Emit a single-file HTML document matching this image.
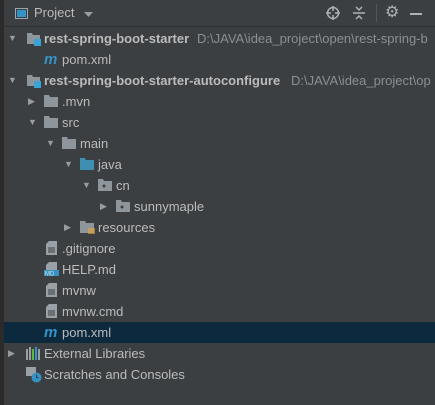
<!DOCTYPE html><html><head><style>
body{margin:0;width:435px;height:405px;background:#3c3f41;font-family:"Liberation Sans",sans-serif;font-size:13px;color:#bbbbbb;position:relative;overflow:hidden}
.strip{position:absolute;left:0;top:0;width:4px;height:405px;background:#2b2b2b}
.hdr{position:absolute;left:4px;top:0;right:0;height:26px;border-bottom:1px solid #2f3133}
.row{position:absolute;left:4px;right:0;height:21px;line-height:21px;white-space:nowrap}
.sel{background:#0d293e}
.a{position:absolute;top:0;font-size:9px;color:#9a9da0}
.i{position:absolute;top:4px}
.t{position:absolute;top:0}
.b{font-weight:bold}
.p{color:#8c8f92}
</style></head><body>
<div class="strip"></div>
<div class="hdr">
<svg style="position:absolute;left:11px;top:8px" width="13" height="11"><rect x="0.5" y="0.5" width="12" height="10" fill="none" stroke="#9aa7b0"/><rect x="2" y="2" width="9" height="7" fill="#3592c4"/></svg>
<span style="position:absolute;left:30px;top:5px">Project</span>
<svg style="position:absolute;left:80px;top:12px" width="9" height="5"><path d="M0 0h9L4.5 5z" fill="#9a9da0"/></svg>
<svg style="position:absolute;left:322px;top:6px" width="14" height="14"><circle cx="7" cy="7" r="5.5" fill="none" stroke="#aeb2b5" stroke-width="1.5"/><path d="M7 0v5M7 9v5M0 7h5M9 7h5" stroke="#aeb2b5" stroke-width="1.5"/></svg>
<svg style="position:absolute;left:349px;top:6px" width="12" height="14"><path d="M0 7h12" stroke="#aeb2b5" stroke-width="1.5"/><path d="M3 1l3 3 3-3M3 13l3-3 3 3" fill="none" stroke="#aeb2b5" stroke-width="1.5"/></svg>
<div style="position:absolute;left:372px;top:4px;width:1px;height:18px;background:#555"></div>
<span style="position:absolute;left:381px;top:2px;font-size:16px;color:#aeb2b5">⚙</span>
<div style="position:absolute;left:406px;top:13px;width:12px;height:2px;background:#aeb2b5"></div>
</div>

<div class="row" style="top:28px"><span class="a" style="left:4px">▼</span>
<svg class="i" style="left:23px" width="14" height="14"><path d="M0 1h5l1 2h7v9H0z" fill="#8e969c"/><rect x="7" y="7" width="7" height="7" fill="#3ba3d8"/></svg>
<span class="t b" style="left:40px">rest-spring-boot-starter</span><span class="t p" style="left:193px">D:\JAVA\idea_project\open\rest-spring-b</span></div>
<div class="row" style="top:49px"><span class="i" style="left:40px;top:0;color:#3592c4;font-style:italic;font-weight:bold;font-size:15px">m</span><span class="t" style="left:58px">pom.xml</span></div>
<div class="row" style="top:70px"><span class="a" style="left:4px">▼</span>
<svg class="i" style="left:23px" width="14" height="14"><path d="M0 1h5l1 2h7v9H0z" fill="#8e969c"/><rect x="7" y="7" width="7" height="7" fill="#3ba3d8"/></svg>
<span class="t b" style="left:40px">rest-spring-boot-starter-autoconfigure</span><span class="t p" style="left:287px">D:\JAVA\idea_project\op</span></div>

<div class="row" style="top:91px"><span class="a" style="left:24px">▶</span><svg class="i" style="left:40px" width="14" height="12"><path d="M0 0h5l1 2h8v10H0z" fill="#8e969c"/></svg><span class="t" style="left:58px">.mvn</span></div>
<div class="row" style="top:112px"><span class="a" style="left:24px">▼</span><svg class="i" style="left:40px" width="14" height="12"><path d="M0 0h5l1 2h8v10H0z" fill="#8e969c"/></svg><span class="t" style="left:58px">src</span></div>
<div class="row" style="top:133px"><span class="a" style="left:42px">▼</span><svg class="i" style="left:58px" width="14" height="12"><path d="M0 0h5l1 2h8v10H0z" fill="#8e969c"/></svg><span class="t" style="left:76px">main</span></div>
<div class="row" style="top:154px"><span class="a" style="left:60px">▼</span><svg class="i" style="left:76px" width="14" height="12"><path d="M0 0h5l1 2h8v10H0z" fill="#3e8fb0"/></svg><span class="t" style="left:94px">java</span></div>
<div class="row" style="top:175px"><span class="a" style="left:78px">▼</span><svg class="i" style="left:94px" width="14" height="12"><path d="M0 0h5l1 2h8v10H0z" fill="#8e969c"/><circle cx="6" cy="7" r="1.5" fill="#3c3f41"/></svg><span class="t" style="left:112px">cn</span></div>
<div class="row" style="top:196px"><span class="a" style="left:96px">▶</span><svg class="i" style="left:112px" width="14" height="12"><path d="M0 0h5l1 2h8v10H0z" fill="#8e969c"/><circle cx="6" cy="7" r="1.5" fill="#3c3f41"/></svg><span class="t" style="left:130px">sunnymaple</span></div>
<div class="row" style="top:217px"><span class="a" style="left:60px">▶</span><svg class="i" style="left:76px" width="16" height="14"><path d="M0 0h5l1 2h8v10H0z" fill="#8e969c"/><path d="M8 8h7M8 10h7M8 12h7" stroke="#e8a33a" stroke-width="1.2"/></svg><span class="t" style="left:94px">resources</span></div>
<div class="row" style="top:238px"><svg class="i" style="left:42px;top:3px" width="11" height="14"><path d="M3 0h8v14H0V3z" fill="#9aa1a6"/><path d="M2 7h7M2 9h7M2 11h7" stroke="#3c3f41"/></svg><span class="t" style="left:58px">.gitignore</span></div>
<div class="row" style="top:259px"><svg class="i" style="left:40px;top:3px" width="15" height="14"><path d="M5 0h8v9H2V3z" fill="#9aa1a6"/><rect x="0" y="8" width="15" height="6" fill="#3592c4"/><text x="1" y="13.5" font-size="6" fill="#ddd" font-family="Liberation Sans">MD</text></svg><span class="t" style="left:58px">HELP.md</span></div>
<div class="row" style="top:280px"><svg class="i" style="left:42px;top:3px" width="11" height="14"><path d="M3 0h8v14H0V3z" fill="#9aa1a6"/><path d="M2 7h7M2 9h7M2 11h7" stroke="#3c3f41"/></svg><span class="t" style="left:58px">mvnw</span></div>
<div class="row" style="top:301px"><svg class="i" style="left:42px;top:3px" width="11" height="14"><path d="M3 0h8v14H0V3z" fill="#9aa1a6"/><path d="M2 7h7M2 9h7M2 11h7" stroke="#3c3f41"/></svg><span class="t" style="left:58px">mvnw.cmd</span></div>
<div class="row sel" style="top:322px"><span class="i" style="left:40px;top:0;color:#3592c4;font-style:italic;font-weight:bold;font-size:15px">m</span><span class="t" style="left:58px">pom.xml</span></div>
<div class="row" style="top:343px"><span class="a" style="left:4px">▶</span><svg class="i" style="left:22px" width="14" height="13"><path d="M1 2v11M4 0v13M7 2v11M10 0v13M13 2v11" stroke-width="2" stroke="#9aa1a6"/><path d="M7 2v11" stroke="#62b543" stroke-width="2"/><path d="M10 0v13" stroke="#3592c4" stroke-width="2"/></svg><span class="t" style="left:40px">External Libraries</span></div>
<div class="row" style="top:364px"><svg class="i" style="left:22px;top:3px" width="16" height="16"><rect x="0" y="0" width="10" height="9" fill="#9aa1a6"/><circle cx="10.5" cy="10.5" r="5" fill="#3592c4"/><path d="M10.5 7.5v3h2" stroke="#3c3f41" fill="none"/></svg><span class="t" style="left:40px">Scratches and Consoles</span></div>
</body></html>
